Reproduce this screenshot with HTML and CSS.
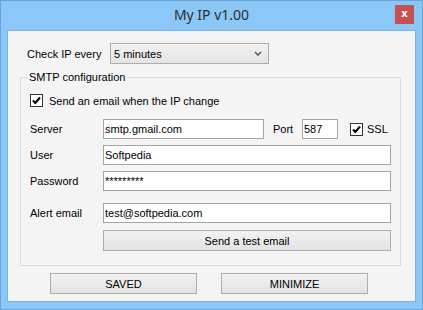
FILE: index.html
```html
<!DOCTYPE html>
<html lang="en">
<head>
    <meta charset="UTF-8">
    <title>My IP v1.00</title>
    <link rel="stylesheet" href="styles.css">
</head>
<body>
    <div class="window">
        <div class="titlebar">
            <span></span>
            <span class="title">My IP v1.00</span>
            <span class="close">x</span>
        </div>

        <div class="client">
            <!-- Check interval -->
            <div class="interval-row">
                <span class="interval-label">Check IP every</span>
                <div class="select">
                    <span>5 minutes</span>
                    <svg width="8" height="6" viewBox="0 0 8 6">
                        <polyline points="1,1 4,4 7,1" fill="none" stroke="#606060" stroke-width="1.6"/>
                    </svg>
                </div>
            </div>

            <!-- SMTP settings -->
            <fieldset class="smtp">
                <legend>SMTP configuration</legend>

                <div class="check-row">
                    <span class="checkbox">
                        <svg width="11" height="11" viewBox="0 0 11 11">
                            <polyline points="2,5.5 4.3,8 9,2.5" fill="none" stroke="#000" stroke-width="2"/>
                        </svg>
                    </span>
                    <span>Send an email when the IP change</span>
                </div>

                <div class="form-row server-row">
                    <span class="field-label">Server</span>
                    <input class="field server" type="text" value="smtp.gmail.com">
                    <span class="port-label">Port</span>
                    <input class="field port" type="text" value="587">
                    <span class="checkbox ssl-box">
                        <svg width="11" height="11" viewBox="0 0 11 11">
                            <polyline points="2,5.5 4.3,8 9,2.5" fill="none" stroke="#000" stroke-width="2"/>
                        </svg>
                    </span>
                    <span>SSL</span>
                </div>

                <div class="form-row">
                    <span class="field-label">User</span>
                    <input class="field wide" type="text" value="Softpedia">
                </div>

                <div class="form-row">
                    <span class="field-label">Password</span>
                    <input class="field wide" type="text" value="*********">
                </div>

                <div class="form-row alert-row">
                    <span class="field-label">Alert email</span>
                    <input class="field wide" type="text" value="test@softpedia.com">
                </div>

                <div class="form-row test-row">
                    <button class="btn test-btn">Send a test email</button>
                </div>
            </fieldset>

            <div class="actions">
                <button class="btn action-btn">SAVED</button>
                <button class="btn action-btn">MINIMIZE</button>
            </div>
        </div>
    </div>
</body>
</html>
```

FILE: styles.css
```css
:root {
    --frame-color: #8bc7f7;
    --frame-edge: #6aa6dc;
    --client-color: #f4f4f4;
    --field-border: #a5a5a5;
    --button-border: #adadad;
    --text-color: #000;
}

* {
    margin: 0;
    padding: 0;
    box-sizing: border-box;
}

body {
    font-family: "Liberation Sans", Arial, sans-serif;
    font-size: 11px;
    color: var(--text-color);
    background: #fff;
}

.window {
    width: 423px;
    height: 310px;
    background: var(--frame-color);
    border: 1px solid var(--frame-edge);
    display: flex;
    flex-direction: column;
}

.titlebar {
    height: 29px;
    display: grid;
    grid-template-columns: 1fr auto 1fr;
    align-items: start;
}

.title {
    font-family: "Noto Sans", "Open Sans", sans-serif;
    font-size: 14px;
    color: #2e2e2e;
    line-height: 20px;
    margin-top: 4px;
}

.close {
    justify-self: end;
    width: 19px;
    height: 19px;
    margin: 4px 8px 0 0;
    background: #c75050;
    color: #fff;
    font-family: "DejaVu Sans", sans-serif;
    font-weight: bold;
    font-size: 10px;
    line-height: 17px;
    text-align: center;
}

.client {
    width: 409px;
    height: 272px;
    margin: 0 6px;
    background: var(--client-color);
    border: 1px solid #7fb2e2;
    padding: 12px 14px 7px 12px;
}

.interval-row {
    display: flex;
    align-items: center;
    height: 21px;
    padding-left: 7px;
}

.interval-label {
    width: 83px;
}

.select {
    width: 159px;
    height: 21px;
    border: 1px solid var(--button-border);
    background: linear-gradient(#f2f2f2, #e4e4e4);
    display: flex;
    align-items: center;
    justify-content: space-between;
    padding: 0 6px 0 3px;
}

.smtp {
    margin-top: 7px;
    border: 1px solid #dadada;
    padding: 0 9px 14px;
    min-width: 0;
}

.smtp legend {
    line-height: 13px;
    padding: 0 2px;
    margin-left: -3px;
}

.check-row {
    display: flex;
    align-items: center;
    height: 15px;
    margin-top: 9px;
}

.checkbox {
    width: 13px;
    height: 13px;
    border: 1px solid #333;
    background: #fff;
    display: inline-flex;
    margin-right: 6px;
}

.form-row {
    display: flex;
    align-items: center;
    height: 20px;
    margin-top: 6px;
}

.server-row {
    margin-top: 11px;
}

.alert-row {
    margin-top: 12px;
}

.test-row {
    height: 21px;
    margin-top: 7px;
    padding-left: 73px;
}

.field-label {
    width: 73px;
}

.field {
    height: 20px;
    border: 1px solid var(--field-border);
    background: #fff;
    font-family: inherit;
    font-size: 11px;
    color: var(--text-color);
    padding: 0 1px;
    outline: none;
}

.server {
    width: 161px;
}

.port-label {
    width: 29px;
    margin-left: 9px;
}

.port {
    width: 36px;
}

.ssl-box {
    margin-left: 12px;
    margin-right: 4px;
}

.wide {
    width: 288px;
}

.btn {
    height: 21px;
    border: 1px solid var(--button-border);
    background: linear-gradient(#f2f2f2, #e3e3e3);
    font-family: inherit;
    font-size: 11px;
    color: var(--text-color);
}

.test-btn {
    width: 288px;
}

.actions {
    display: flex;
    gap: 24px;
    margin-top: 7px;
    padding-left: 30px;
}

.action-btn {
    width: 147px;
}
```
